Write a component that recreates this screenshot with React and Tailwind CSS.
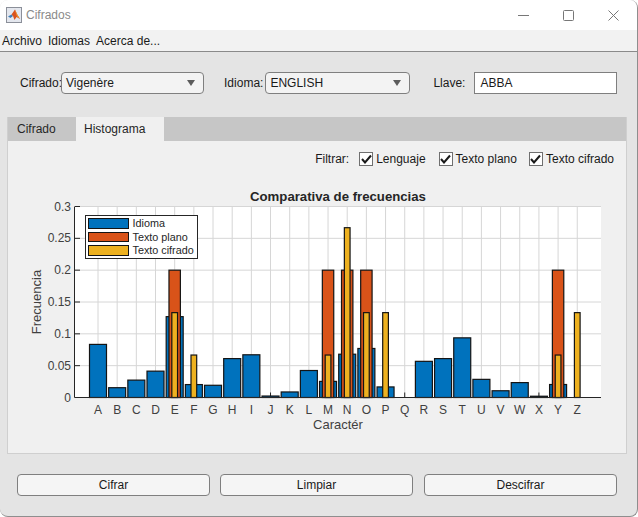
const FONT = "font-['Liberation_Sans',Arial,sans-serif]"

const LETTERS = 'ABCDEFGHIJKLMNOPQRSTUVWXYZ'.split('')
const IDIOMA = [0.0834, 0.0154, 0.0273, 0.0414, 0.127, 0.0203, 0.0192, 0.0611, 0.0671, 0.0023, 0.0087, 0.0424, 0.0253, 0.068, 0.077, 0.0166, 0, 0.0568, 0.0611, 0.0937, 0.0285, 0.0106, 0.0234, 0.002, 0.0204, 0]
const PLANO = { E: 0.2, M: 0.2, N: 0.2, O: 0.2, Y: 0.2 }
const CIFRADO = { E: 0.1333, F: 0.0667, M: 0.0667, N: 0.2667, O: 0.1333, P: 0.1333, Y: 0.0667, Z: 0.1333 }
const YTICKS = [0, 0.05, 0.1, 0.15, 0.2, 0.25, 0.3]

const LEFT = 75
const RIGHT = 601
const TOP = 206.5
const BOTTOM = 397.5
const sx = (i) => 98 + i * 19.17
const sy = (v) => BOTTOM - (v / 0.3) * (BOTTOM - TOP)

function Bar({ cx, width, value, fill }) {
  return <rect x={cx - width / 2} y={sy(value)} width={width} height={BOTTOM - sy(value)} fill={fill} stroke="#141414" strokeWidth="1.2" />
}

// grafica de frecuencias, viewBox en coordenadas de la ventana
function Chart() {
  return (
    <svg width="617" height="276" viewBox="8 177 617 276" className="block shrink-0">
      <text x="338" y="201" textAnchor="middle" fontSize="13.2" fontWeight="700" fill="#262626">Comparativa de frecuencias</text>
      <rect x={LEFT} y={TOP} width={RIGHT - LEFT} height={BOTTOM - TOP} fill="#fff" />
      {LETTERS.map((l, i) => (
        <line key={l} x1={sx(i)} x2={sx(i)} y1={TOP} y2={BOTTOM} stroke="#d6d6d6" />
      ))}
      {YTICKS.map((t) => (
        <line key={t} x1={LEFT} x2={RIGHT} y1={sy(t)} y2={sy(t)} stroke="#d6d6d6" />
      ))}
      {LETTERS.map((l, i) => (
        <line key={l} x1={sx(i)} x2={sx(i)} y1={BOTTOM - 5} y2={BOTTOM} stroke="#262626" />
      ))}
      {IDIOMA.map((v, i) => v > 0 && <Bar key={i} cx={sx(i)} width={17} value={v} fill="#0072bd" />)}
      {LETTERS.map((l, i) => PLANO[l] && <Bar key={l} cx={sx(i)} width={11.4} value={PLANO[l]} fill="#d95319" />)}
      {LETTERS.map((l, i) => CIFRADO[l] && <Bar key={l} cx={sx(i)} width={5.7} value={CIFRADO[l]} fill="#edb120" />)}
      <line x1={LEFT - 0.5} x2={LEFT - 0.5} y1={TOP} y2={BOTTOM} stroke="#262626" />
      <line x1={LEFT - 0.5} x2={RIGHT} y1={BOTTOM} y2={BOTTOM} stroke="#262626" />
      {YTICKS.map((t) => (
        <g key={t}>
          <line x1={LEFT} x2={LEFT + 5} y1={sy(t)} y2={sy(t)} stroke="#262626" />
          <text x={LEFT - 4} y={sy(t) + 4} textAnchor="end" fontSize="12" fill="#404040">{t}</text>
        </g>
      ))}
      {LETTERS.map((l, i) => (
        <text key={l} x={sx(i)} y={413.5} textAnchor="middle" fontSize="12" fill="#404040">{l}</text>
      ))}
      <text x="338" y="429" textAnchor="middle" fontSize="13" fill="#404040">Caractér</text>
      <text transform="translate(41 302) rotate(-90)" textAnchor="middle" fontSize="13" fill="#404040">Frecuencia</text>
      <rect x="85.5" y="215.5" width="112" height="43" fill="#fff" stroke="#262626" />
      <rect x="88.5" y="218.5" width="40" height="10" fill="#0072bd" stroke="#141414" />
      <rect x="88.5" y="232.5" width="40" height="9" fill="#d95319" stroke="#141414" />
      <rect x="88.5" y="245.5" width="40" height="10" fill="#edb120" stroke="#141414" />
      <text x="132.5" y="227" fontSize="10.8" fill="#262626">Idioma</text>
      <text x="132.5" y="241" fontSize="10.8" fill="#262626">Texto plano</text>
      <text x="132.5" y="254" fontSize="10.8" fill="#262626">Texto cifrado</text>
    </svg>
  )
}

function Dropdown({ value, className }) {
  return (
    <div className={`flex h-[22px] items-center justify-between rounded-[4px] border border-[#7f7f7f] bg-[#f3f3f3] pl-[4px] pr-[8px] ${className}`}>
      <span>{value}</span>
      <svg width="8" height="6" viewBox="0 0 8 6"><path d="M0 0h8L4 6z" fill="#5c5c5c" /></svg>
    </div>
  )
}

function Check({ label, className }) {
  return (
    <label className={`flex items-center gap-[3px] ${className}`}>
      <span className="flex h-[14px] w-[14px] items-center justify-center border border-[#6f6f6f] bg-white">
        <svg width="11" height="10" viewBox="0 0 11 10"><path d="M1 5 4 8.5 10 1.5" fill="none" stroke="#1a1a1a" strokeWidth="2" /></svg>
      </span>
      <span>{label}</span>
    </label>
  )
}

function Button({ children, className }) {
  return (
    <button className={`flex h-[22px] items-center justify-center rounded-[4px] border border-[#7f7f7f] bg-[#f5f5f5] text-[12px] text-[#1a1a1a] ${className}`}>
      {children}
    </button>
  )
}

function MatlabIcon() {
  return (
    <svg width="16" height="16" viewBox="0 0 16 16">
      <rect x="0.5" y="0.5" width="15" height="15" fill="#e4e7ee" stroke="#8b8f99" />
      <path d="M2 9.5 5.5 7.5 7 9 4.5 11z" fill="#3f7fb8" />
      <path d="M5.5 7.5 9 2.5 11 7 14 12 10.5 10 8.5 13 7 9z" fill="#d9531e" />
      <path d="M9 2.5 11 7 14 12 11 9.5 9.5 5z" fill="#ee9b2d" />
    </svg>
  )
}

export default function App() {
  return (
    <div className={`flex h-[517px] w-[638px] flex-col overflow-hidden rounded-[8px] border-r border-b border-[#8e8e8e] bg-[#e4e4e4] text-[12px] text-[#1a1a1a] ${FONT}`}>
      <div className="flex h-[30px] shrink-0 items-center bg-white pl-[6px]">
        <MatlabIcon />
        <span className="ml-[4px] text-[12px] text-[#8a8a8a]">Cifrados</span>
        <div className="ml-auto flex items-center gap-[34px] pr-[18px]">
          <svg width="11" height="11" viewBox="0 0 11 11"><path d="M0 5.5h11" stroke="#777" /></svg>
          <svg width="11" height="11" viewBox="0 0 11 11"><rect x="0.5" y="0.5" width="10" height="10" rx="1" fill="none" stroke="#777" /></svg>
          <svg width="11" height="11" viewBox="0 0 11 11"><path d="M0.5 0.5l10 10M10.5 0.5l-10 10" stroke="#777" /></svg>
        </div>
      </div>
      <div className="flex h-[22px] shrink-0 items-center gap-[6px] border-b border-[#8a8a8a] bg-[#f2f2f2] pl-[2px]">
        <span>Archivo</span>
        <span>Idiomas</span>
        <span>Acerca de...</span>
      </div>
      <div className="flex shrink-0 items-center pl-[20px] pt-[20px]">
        <span>Cifrado:</span>
        <Dropdown value="Vigenère" className="-ml-[1px] w-[143px]" />
        <span className="ml-[20px]">Idioma:</span>
        <Dropdown value="ENGLISH" className="ml-[2px] w-[145px]" />
        <span className="ml-[23px]">Llave:</span>
        <div className="ml-[9px] flex h-[22px] w-[143px] items-center border border-[#7f7f7f] bg-white pl-[5px]">ABBA</div>
      </div>
      <div className="mx-[7px] mt-[23px] flex h-[337px] w-[620px] shrink-0 flex-col border border-t-0 border-[#cfcfcf] bg-[#f0f0f0]">
        <div className="flex h-[24px] shrink-0 items-stretch bg-[#c6c6c6]">
          <span className="flex w-[68px] items-center pl-[9px] text-[#262626]">Cifrado</span>
          <span className="flex w-[88px] items-center bg-[#f0f0f0] pl-[8px] text-[#262626]">Histograma</span>
        </div>
        <div className="flex h-[36px] shrink-0 items-center justify-end pb-[1px] pr-[12px]">
          <span className="mr-[10px]">Filtrar:</span>
          <Check label="Lenguaje" className="mr-[13px]" />
          <Check label="Texto plano" className="mr-[12px]" />
          <Check label="Texto cifrado" />
        </div>
        <Chart />
      </div>
      <div className="flex shrink-0 gap-[10px] pl-[17px] pt-[20px]">
        <Button className="w-[193px]">Cifrar</Button>
        <Button className="w-[193px]">Limpiar</Button>
        <Button className="ml-[1px] w-[193px]">Descifrar</Button>
      </div>
    </div>
  )
}
